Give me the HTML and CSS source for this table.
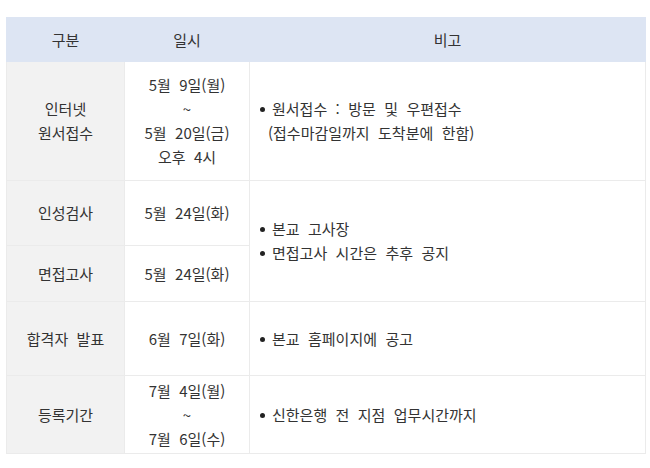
FILE: index.html
```html
<!DOCTYPE html>
<html lang="ko">
<head>
<meta charset="utf-8">
<link rel="stylesheet" href="styles.css">
</head>
<body>
<div class="wrap">
<table class="sched">
  <colgroup>
    <col class="c1"><col class="c2"><col class="c3">
  </colgroup>
  <thead>
    <tr class="r-head"><th>구분</th><th>일시</th><th>비고</th></tr>
  </thead>
  <tbody>
    <tr class="r1">
      <td class="cat">인터넷<br>원서접수</td>
      <td>5월&nbsp;&nbsp;9일(월)<br>~<br>5월&nbsp;&nbsp;20일(금)<br>오후&nbsp;&nbsp;4시</td>
      <td class="note"><span class="li"><span class="bul"></span>원서접수&nbsp;&nbsp;:&nbsp;&nbsp;방문&nbsp;&nbsp;및&nbsp;&nbsp;우편접수</span><span class="cont">(접수마감일까지&nbsp;&nbsp;도착분에&nbsp;&nbsp;한함)</span></td>
    </tr>
    <tr class="r2">
      <td class="cat">인성검사</td>
      <td>5월&nbsp;&nbsp;24일(화)</td>
      <td class="note" rowspan="2"><span class="li"><span class="bul"></span>본교&nbsp;&nbsp;고사장</span><span class="li"><span class="bul"></span>면접고사&nbsp;&nbsp;시간은&nbsp;&nbsp;추후&nbsp;&nbsp;공지</span></td>
    </tr>
    <tr class="r3">
      <td class="cat">면접고사</td>
      <td>5월&nbsp;&nbsp;24일(화)</td>
    </tr>
    <tr class="r4">
      <td class="cat">합격자&nbsp;&nbsp;발표</td>
      <td>6월&nbsp;&nbsp;7일(화)</td>
      <td class="note"><span class="li"><span class="bul"></span>본교&nbsp;&nbsp;홈페이지에&nbsp;&nbsp;공고</span></td>
    </tr>
    <tr class="r5">
      <td class="cat">등록기간</td>
      <td>7월&nbsp;&nbsp;4일(월)<br>~<br>7월&nbsp;&nbsp;6일(수)</td>
      <td class="note"><span class="li"><span class="bul"></span>신한은행&nbsp;&nbsp;전&nbsp;&nbsp;지점&nbsp;&nbsp;업무시간까지</span></td>
    </tr>
  </tbody>
</table>
</div>
</body>
</html>
```
FILE: styles.css
```css
html, body {
  margin: 0;
  padding: 0;
  background: #fff;
}
.wrap {
  padding: 17px 5px 0 6px;
}
.sched {
  width: 639px;
  border-collapse: collapse;
  table-layout: fixed;
  font-family: "Noto Sans CJK KR", "Noto Sans", sans-serif;
  font-size: 15px;
  line-height: 24px;
  color: #333;
}
.c1 { width: 118px; }
.c2 { width: 125px; }
.c3 { width: 396px; }
.sched th,
.sched td {
  border: 1px solid #ebebeb;
  padding: 0;
  text-align: center;
  vertical-align: middle;
  font-weight: 400;
  white-space: nowrap;
}
.sched th {
  background: #dde5f3;
  border-color: #dde5f3;
  color: #333;
}
.sched td.cat {
  background: #f2f2f2;
}
.sched td.note {
  text-align: left;
  padding-left: 10px;
}
.li {
  display: block;
}
.cont {
  display: block;
  padding-left: 8px;
}
.bul {
  display: inline-block;
  width: 5px;
  height: 5px;
  border-radius: 50%;
  background: #222;
  margin-right: 7px;
  vertical-align: middle;
  position: relative;
  top: -1px;
}
.r-head { height: 44px; }
.r1 { height: 119px; }
.r2 { height: 65px; }
.r3 { height: 56px; }
.r4 { height: 74px; }
.r5 { height: 78px; }
```
